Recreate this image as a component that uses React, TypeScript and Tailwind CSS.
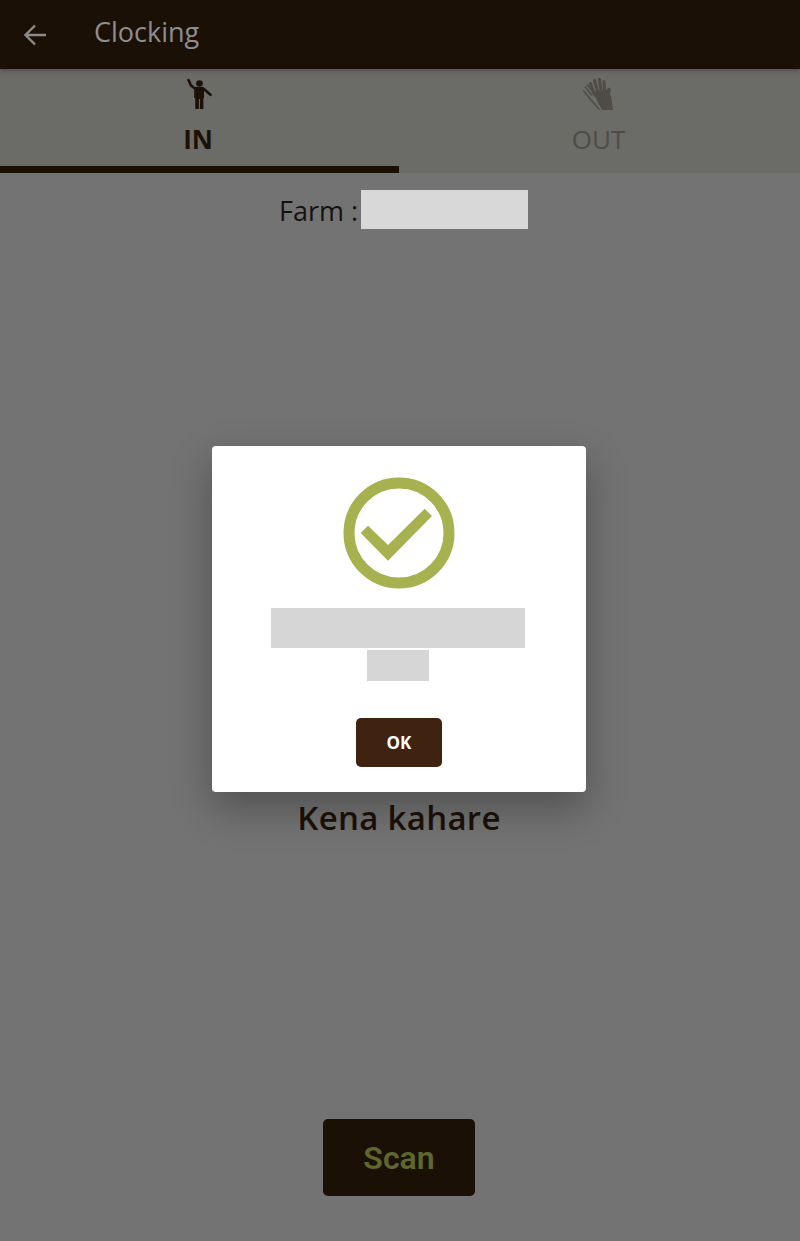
import type { FC } from 'react'

const sans = "font-['Open_Sans','Liberation_Sans',sans-serif]"

const WaveIcon: FC = () => (
  <svg viewBox="0 0 26 32" className="h-[32px] w-[26px]" fill="none">
    <circle cx="12.5" cy="5.5" r="3.3" fill="#1c1107" />
    <path d="M1.5 2 L3.8 7.2 L7.5 10.2 H16 L23.5 16.8" stroke="#1c1107" strokeWidth="2.6" strokeLinecap="round" strokeLinejoin="round" />
    <path d="M7.2 9.5 H17 V20 H16.4 V31 H12.9 V21 H11.9 V31 H8.2 V20 H7.2 Z" fill="#1c1107" />
  </svg>
)

const HandsIcon: FC = () => (
  <svg viewBox="0 0 32 33" className="h-[33px] w-[32px]" fill="none">
    <path d="M0.8 13 L8 22 L16 31 M2.5 9 L8.5 17 M4.5 7 L9.5 13" stroke="#4f4c48" strokeWidth="1.6" strokeLinecap="round" />
    <path d="M11 16 L7.5 5.5 M14.5 13 L11.5 2.5 M18 13 L16.5 1.5 M21.5 13 L21 3.5" stroke="#4f4c48" strokeWidth="3" strokeLinecap="round" />
    <path d="M24 20 L26 11.5" stroke="#4f4c48" strokeWidth="3.6" strokeLinecap="round" />
    <path d="M9.5 14 L23.5 11.5 L28 18 L30 32 L19 32 L16.5 27 Z" fill="#4f4c48" />
  </svg>
)

const App: FC = () => (
  <div className={`relative flex h-[1241px] w-[800px] flex-col overflow-hidden bg-[#737373] ${sans}`}>
    <header className="z-10 flex h-[69px] shrink-0 items-center bg-[#1b1006] shadow-[0_2px_4px_rgba(0,0,0,0.25)]">
      <svg viewBox="0 0 24 24" className="ml-[23px] h-[24px] w-[24px]" fill="none" stroke="#8d8a87" strokeWidth="2.4">
        <path d="M23 12 H3 M12 2.5 L2.5 12 L12 21.5" />
      </svg>
      <h1 className="mb-[7px] ml-[47px] text-[27px] leading-none text-[#8d8d8d]">Clocking</h1>
    </header>

    <nav className="flex h-[104px] w-full shrink-0 bg-[#6b6b68]">
      <div className="flex w-[399px] flex-col items-center border-b-[7px] border-[#1b1006] pt-[9px]">
        <WaveIcon />
        <span className="mt-[11px] mr-[3px] text-[26px] leading-[36px] font-bold text-[#1c1107]">IN</span>
      </div>
      <div className="flex w-[399px] flex-col items-center pt-[9px]">
        <HandsIcon />
        <span className="mt-[10px] text-[26px] leading-[36px] text-[#4f4c48]">OUT</span>
      </div>
    </nav>

    <main className="flex w-[798px] flex-1 flex-col items-center pt-[17px]">
      <div className="ml-[9px] flex h-[39px] items-center">
        <span className="mt-[2px] text-[27px] leading-none text-[#141210]">Farm :</span>
        <span className="ml-[3px] h-[39px] w-[167px] bg-[#d8d8d8]" />
      </div>
      <p className="mt-[567px] text-[33px] leading-[44px] font-semibold tracking-[0.3px] text-[#1c1107]">Kena kahare</p>
      <button
        type="button"
        className="mt-[279px] h-[77px] w-[152px] rounded-[5px] bg-[#1b1006] pt-[1px] font-['Roboto',sans-serif] text-[32px] font-semibold text-[#5f672f]"
      >
        Scan
      </button>
    </main>

    <div className="absolute inset-0 flex w-[798px] justify-center pt-[446px]">
      <div className="flex h-[346px] w-[374px] flex-col items-center rounded-[4px] bg-white pt-[31px] shadow-[0_16px_40px_rgba(0,0,0,0.3)]">
        <svg viewBox="0 0 112 112" className="h-[112px] w-[112px]">
          <circle cx="56" cy="56" r="50" fill="none" stroke="#a7b14f" strokeWidth="11" />
          <path d="M17.7 56 L25 48.7 L45 68 L81.7 31.7 L89 39 L45 83.7 Z" fill="#a7b14f" />
        </svg>
        <div className="mt-[19px] mr-[2px] h-[40px] w-[254px] bg-[#d6d6d6]" />
        <div className="mt-[2px] mr-[2px] h-[31px] w-[62px] bg-[#d6d6d6]" />
        <button
          type="button"
          className="mt-[37px] h-[49px] w-[86px] rounded-[5px] bg-[#3f2310] text-[17px] font-bold text-white"
        >
          OK
        </button>
      </div>
    </div>
  </div>
)

export default App
